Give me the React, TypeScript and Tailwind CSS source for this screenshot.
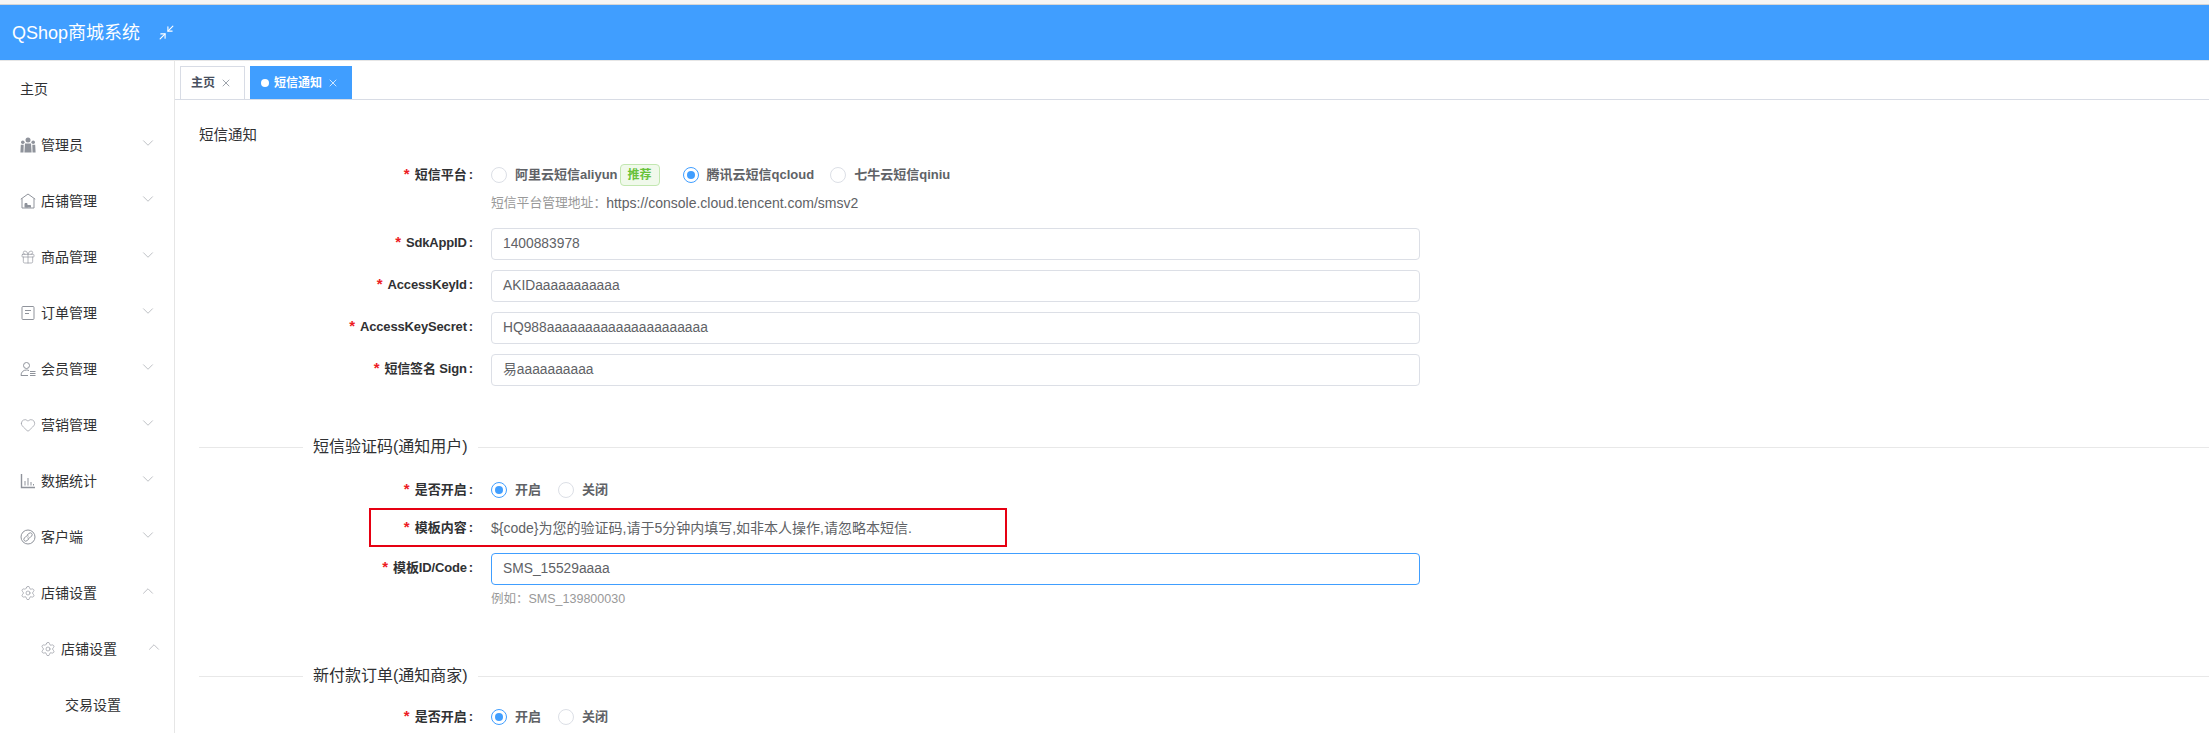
import { ChevronDown, ChevronUp, Gift, Heart, Minimize2, Settings, X } from "lucide-react";
import type { ReactNode } from "react";

const font = "font-['Liberation_Sans','Noto_Sans_CJK_SC',sans-serif]";
const iconColor = "#8f939b";

const GroupIcon = () => (
  <svg width="16" height="16" viewBox="0 0 16 16" fill={iconColor}>
    <circle cx="8" cy="3" r="2.5" />
    <circle cx="2.8" cy="5.2" r="1.8" />
    <circle cx="13.2" cy="5.2" r="1.8" />
    <path d="M5 6.5h6l.6 9H4.4z" />
    <path d="M.8 7.8h2.9l-.2 7.7H.4zM12.3 7.8h2.9l.4 7.7h-3.1z" />
  </svg>
);

const ShopIcon = () => (
  <svg width="16" height="16" viewBox="0 0 16 16" fill="none" stroke={iconColor}>
    <path d="M.8 6.2 8 1l7.2 5.2M2 5.5V15h12V5.5" />
    <path d="M5 14.5v-4h2v4M7 14.5v-2h3.5v2" fill={iconColor} />
  </svg>
);

const OrderIcon = () => (
  <svg width="16" height="16" viewBox="0 0 16 16" fill="none" stroke={iconColor}>
    <rect x="2" y="1.5" width="12" height="13" rx="1" />
    <path d="M5 5.5h6M5 8.5h4" />
  </svg>
);

const MemberIcon = () => (
  <svg width="16" height="16" viewBox="0 0 16 16" fill="none" stroke={iconColor}>
    <circle cx="6.5" cy="4.5" r="3" />
    <path d="M1 14.5c0-3.5 2.4-5.5 5.5-5.5 1 0 1.8.2 2.5.6M1 14.5h7M10 10.5h5.5M10 12.5h5.5M10 14.5h5.5" />
  </svg>
);

const ChartIcon = () => (
  <svg width="16" height="16" viewBox="0 0 16 16" fill="none" stroke={iconColor}>
    <path d="M1.5 1v13.5H15" strokeWidth="1.4" />
    <path d="M5 8v4.5M8 5v7.5M11 9v3.5M13.5 11v1.5" />
  </svg>
);

const LinkCircleIcon = () => (
  <svg width="16" height="16" viewBox="0 0 16 16" fill="none" stroke={iconColor}>
    <circle cx="8" cy="8" r="7" />
    <path d="M7 6.2 9 4.4a1.8 1.8 0 0 1 2.6 2.6L9.8 8.8a1.8 1.8 0 0 1-2.4 0" />
    <path d="M9 9.8 7 11.6A1.8 1.8 0 0 1 4.4 9l1.8-1.8a1.8 1.8 0 0 1 2.4 0" />
  </svg>
);

const Gear = () => <Settings size={18} color={iconColor} strokeWidth={1} />;

type MenuItem = {
  label: string;
  icon?: ReactNode;
  open?: boolean;
};

const menu: MenuItem[] = [
  { label: "管理员", icon: <GroupIcon /> },
  { label: "店铺管理", icon: <ShopIcon /> },
  { label: "商品管理", icon: <Gift size={18} color={iconColor} strokeWidth={1} /> },
  { label: "订单管理", icon: <OrderIcon /> },
  { label: "会员管理", icon: <MemberIcon /> },
  { label: "营销管理", icon: <Heart size={18} color={iconColor} strokeWidth={1} /> },
  { label: "数据统计", icon: <ChartIcon /> },
  { label: "客户端", icon: <LinkCircleIcon /> },
  { label: "店铺设置", icon: <Gear />, open: true },
];

const Arrow = ({ open }: { open?: boolean }) =>
  open ? (
    <ChevronUp size={18} color="#a8abb2" strokeWidth={1} className="-translate-y-0.5" />
  ) : (
    <ChevronDown size={18} color="#a8abb2" strokeWidth={1} className="-translate-y-0.5" />
  );

const SideRow = ({ label, icon, open }: MenuItem) => (
  <div className="flex h-14 items-center pr-[17px] pl-5 text-sm text-[#303133]">
    <span className="mr-[5px] flex w-4 shrink-0 items-center justify-center">{icon}</span>
    <span className="grow">{label}</span>
    <Arrow open={open} />
  </div>
);

const Sidebar = () => (
  <aside className="flex w-[175px] shrink-0 flex-col border-r border-[#e6e6e6]">
    <div className="flex h-14 items-center pl-5 text-sm text-[#303133]">主页</div>
    {menu.map((m) => (
      <SideRow key={m.label} {...m} />
    ))}
    <div className="flex h-14 items-center pr-[11px] pl-10 text-sm text-[#303133]">
      <span className="mr-[5px] flex w-4 shrink-0 items-center justify-center">
        <Gear />
      </span>
      <span className="grow">店铺设置</span>
      <Arrow open />
    </div>
    <div className="flex h-14 items-center pl-[65px] text-sm text-[#303133]">交易设置</div>
  </aside>
);

const Tabs = () => (
  <div className="flex h-[39px] shrink-0 items-end gap-[5px] border-b border-[#d8dce5] pl-[5px]">
    <div className="flex h-[33px] w-[65px] items-center gap-[5px] border border-b-0 border-[#d8dce5] pl-[10px] text-xs font-bold text-[#495060]">
      主页
      <X size={12} color="#7d8590" strokeWidth={1.5} />
    </div>
    <div className="flex h-[33px] w-[102px] items-center bg-[#409eff] pl-[11px] text-xs font-bold text-white">
      <span className="mr-[5px] h-2 w-2 rounded-full bg-white" />
      短信通知
      <X size={12} color="#ffffff" strokeWidth={1.5} className="ml-[5px]" />
    </div>
  </div>
);

const Label = ({ children, tight }: { children: ReactNode; tight?: boolean }) => (
  <label
    className={
      tight
        ? "mr-[18px] w-[274px] shrink-0 pb-0.5 text-right text-[13px] leading-6 font-bold tracking-[-0.15px] text-[#303133]"
        : "mr-[18px] w-[274px] shrink-0 text-right text-[13px] leading-6 font-bold text-[#303133]"
    }
  >
    <span className="mr-[5px] text-[15px] leading-none text-[#ed1c24]">*</span>
    {children}
    <span className="ml-[2px]">:</span>
  </label>
);

const Field = ({
  label,
  value,
  focused,
}: {
  label: string;
  value: string;
  focused?: boolean;
}) => (
  <div className="mb-2.5 flex items-center">
    <Label tight>{label}</Label>
    <div
      className={
        focused
          ? "flex h-8 w-[929px] items-center rounded border border-[#409eff] px-[11px] text-[13.8px] text-[#606266]"
          : "flex h-8 w-[929px] items-center rounded border border-[#dcdfe6] px-[11px] text-[13.8px] text-[#606266]"
      }
    >
      {value}
    </div>
  </div>
);

const Radio = ({
  label,
  checked,
  className,
}: {
  label: string;
  checked?: boolean;
  className?: string;
}) => (
  <div className={`flex items-center ${className ?? ""}`}>
    {checked ? (
      <span className="flex h-4 w-4 items-center justify-center rounded-full border border-[#409eff]">
        <span className="h-2 w-2 rounded-full bg-[#409eff]" />
      </span>
    ) : (
      <span className="h-4 w-4 rounded-full border border-[#dcdfe6]" />
    )}
    <span className="ml-2 text-[13px] font-bold text-[#606266]">{label}</span>
  </div>
);

const Legend = ({ title, className }: { title: string; className: string }) => (
  <div className={`flex h-6 items-center ${className}`}>
    <div className="h-px w-[104px] bg-[#e8e8e8]" />
    <span className="mx-[10px] text-base text-[#303133]">{title}</span>
    <div className="h-px grow bg-[#e8e8e8]" />
  </div>
);

const SwitchRow = ({ className }: { className: string }) => (
  <div className={`flex h-6 items-center ${className}`}>
    <Label>是否开启</Label>
    <Radio label="开启" checked />
    <Radio label="关闭" className="ml-[17px]" />
  </div>
);

const App = () => {
  return (
    <div className={`relative flex h-[733px] w-[2209px] flex-col overflow-hidden bg-white ${font}`}>
      <div className="h-[5px] shrink-0 border-b border-[#d5d5d5] bg-[#f5f5f5]" />
      <header className="flex h-14 shrink-0 items-center border-b border-[#e6e6e6] bg-[#409eff] pl-3 text-white">
        <span className="text-lg">QShop商城系统</span>
        <Minimize2 size={17} strokeWidth={1.6} className="ml-[18px]" />
      </header>
      <div className="flex min-h-0 grow">
        <Sidebar />
        <main className="min-w-0 grow">
          <Tabs />
          <div className="pt-[25px] pl-[24px]">
            <h2 className="text-[14.5px] leading-5 text-[#303133]">短信通知</h2>
            <div className="mt-[18px] flex h-6 items-center">
              <Label>短信平台</Label>
              <Radio label="阿里云短信aliyun" />
              <span className="ml-[2px] flex h-[22px] w-10 items-center justify-center rounded border border-[#c2e7b0] bg-[#f0f9eb] text-xs font-bold text-[#67c23a]">
                推荐
              </span>
              <Radio label="腾讯云短信qcloud" checked className="ml-[23px]" />
              <Radio label="七牛云短信qiniu" className="ml-[16px]" />
            </div>
            <div className="mt-[6px] ml-[292px] flex h-5 items-center text-[12.8px] text-[#999999]">
              短信平台管理地址：
              <span className="text-sm text-[#606266]">https://console.cloud.tencent.com/smsv2</span>
            </div>
            <div className="mt-[15px]">
              <Field label="SdkAppID" value="1400883978" />
              <Field label="AccessKeyId" value="AKIDaaaaaaaaaaa" />
              <Field label="AccessKeySecret" value="HQ988aaaaaaaaaaaaaaaaaaaaa" />
              <Field label="短信签名 Sign" value="易aaaaaaaaaa" />
            </div>
            <Legend title="短信验证码(通知用户)" className="mt-[49px]" />
            <SwitchRow className="mt-[19px]" />
            <div className="mt-[14px] flex h-6 items-center">
              <Label>模板内容</Label>
              <span className="text-sm text-[#606266]">
                {"${code}为您的验证码,请于5分钟内填写,如非本人操作,请忽略本短信."}
              </span>
            </div>
            <div className="mt-[13px]">
              <Field label="模板ID/Code" value="SMS_15529aaaa" focused />
            </div>
            <div className="-mt-1.5 ml-[292px] flex h-5 items-center text-[12.5px] text-[#999999]">
              例如：SMS_139800030
            </div>
            <Legend title="新付款订单(通知商家)" className="mt-[55px]" />
            <SwitchRow className="mt-[17px]" />
          </div>
        </main>
      </div>
      <div className="pointer-events-none absolute top-[508px] left-[369px] h-[39px] w-[638px] border-2 border-[#e60012]" />
    </div>
  );
};

export default App;
